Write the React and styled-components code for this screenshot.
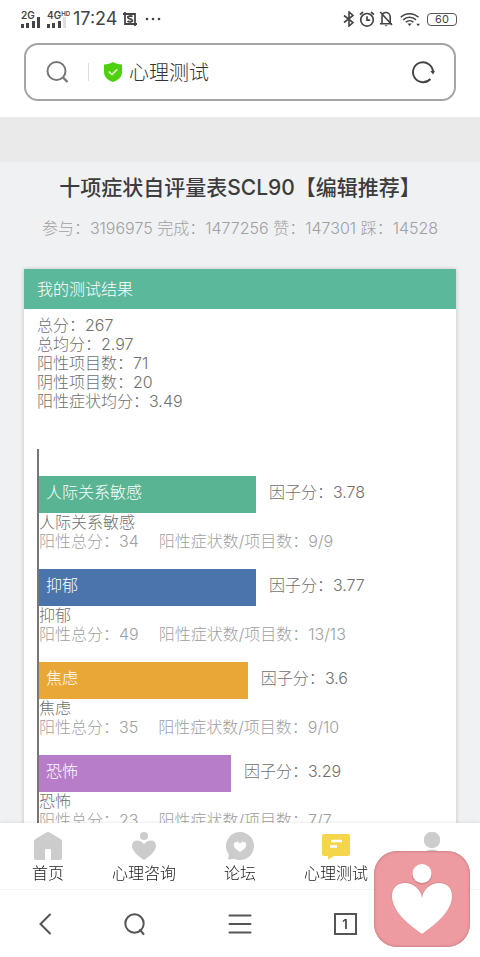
import React, { useState } from "react";
import styled, { createGlobalStyle } from "styled-components";

const factors = [
  { name: "人际关系敏感", score: "3.78", total: 34, items: "9/9", color: "#58b492", width: 53.7 },
  { name: "抑郁", score: "3.77", total: 49, items: "13/13", color: "#4b74ac", width: 53.7 },
  { name: "焦虑", score: "3.6", total: 35, items: "9/10", color: "#e9a836", width: 51.7 },
  { name: "恐怖", score: "3.29", total: 23, items: "7/7", color: "#b77dc8", width: 47.5 },
];

const summary = [
  ["总分", "267"],
  ["总均分", "2.97"],
  ["阳性项目数", "71"],
  ["阴性项目数", "20"],
  ["阳性症状均分", "3.49"],
];

const Bars = ({ weak }) => (
  <svg width="20" height="18" viewBox="0 0 20 18" fill="#444">
    <rect x="0" y="14" width="3" height="4" />
    <rect x="5" y="13" width="3" height="5" />
    <rect x="11" y="11" width="3" height="7" />
    <rect x="16" y="7" width="3" height="11" fill={weak ? "#ddd" : "#444"} />
  </svg>
);

const StatusBar = () => (
  <Status>
    <StatusGroup>
      <Signal>
        <Bars />
        <SignalLabel>2G</SignalLabel>
      </Signal>
      <Signal>
        <Bars weak />
        <SignalLabel>
          4G<sup>HD</sup>
        </SignalLabel>
      </Signal>
      <Clock>17:24</Clock>
      <svg width="14" height="14" viewBox="0 0 14 14" fill="none" stroke="#444" strokeWidth="1.8">
        <path d="M0 2h12v12M2 0v12h12" />
        <path d="M9.5 4.6C8.500 3.800 4.600 3.600 4.800 5.500C5 7.300 9.400 6.300 9.400 8.400C9.400 10.200 5.600 10 4.500 9" />
      </svg>
      <Dots width="16" height="4" viewBox="0 0 16 4" fill="#444">
        <circle cx="2" cy="2" r="1.300" />
        <circle cx="8" cy="2" r="1.300" />
        <circle cx="14" cy="2" r="1.300" />
      </Dots>
    </StatusGroup>
    <StatusIcons>
      <svg width="12" height="16" viewBox="0 0 12 16" fill="none" stroke="#444" strokeWidth="1.6">
        <path d="M1 4.500L10 11.500L6 15V1L10 4.500L1 11.500" />
      </svg>
      <svg width="16" height="16" viewBox="0 0 16 16" fill="none" stroke="#444" strokeWidth="1.7">
        <circle cx="8" cy="8.800" r="6.300" />
        <path d="M8 5.200V9.200H11.200M1 3.600L4 1M15 3.600L12 1" />
      </svg>
      <svg width="14" height="16" viewBox="0 0 14 16" fill="none" stroke="#444" strokeWidth="1.6">
        <path d="M3 12.500V5.800C3 3.300 4.700 1.500 7 1.500S11.200 3.300 11.200 5.800V12.500M1 12.700H13M1.200 1L13 14" />
        <path d="M5.500 14.200H8.700L7.100 15.600Z" fill="#444" stroke="none" />
      </svg>
      <Wifi width="20" height="15" viewBox="0 0 20 15" fill="none" stroke="#444" strokeWidth="1.5">
        <path d="M.7 5.300C5.500.4 13.500.4 18.500 5.300M3.200 7.900C6.800 4.400 12.400 4.400 16 7.900M5.800 10.300C8 8.200 11.300 8.200 13.500 10.300" />
        <path d="M7.400 11.500H11.800L9.600 14ZM16.300 11.800H20L18.150 14.200Z" fill="#444" stroke="none" />
      </Wifi>
      <Battery>60</Battery>
    </StatusIcons>
  </Status>
);

const AddressBar = () => {
  const [text, setText] = useState("心理测试");

  return (
    <Address onSubmit={(e) => e.preventDefault()}>
      <svg width="24" height="24" viewBox="0 0 24 24" fill="none" stroke="#777" strokeWidth="2">
        <circle cx="11.500" cy="11" r="9" />
        <path d="M18 17.500L22.500 22" strokeWidth="2.400" />
      </svg>
      <Divider />
      <svg width="18" height="20" viewBox="0 0 18 20">
        <path d="M9 0C11.500 1.700 14.500 2.200 18 2.500V10C18 15 14 18.500 9 20C4 18.500 0 15 0 10V2.500C3.500 2.200 6.500 1.700 9 0Z" fill="#4fd00c" />
        <path d="M4.800 9.500L8 12.600L13.300 7.300" fill="none" stroke="#d9f8c6" strokeWidth="1.700" />
      </svg>
      <AddressInput aria-label="地址" value={text} onChange={(e) => setText(e.target.value)} />
      <IconButton type="button" aria-label="刷新">
        <svg width="24" height="24" viewBox="0 0 24 24" fill="none" stroke="#444" strokeWidth="1.900">
          <path d="M19.400 19A10 10 0 1 1 22 12" />
          <path d="M19.300 11H24L22 14.500Z" fill="#444" stroke="none" />
        </svg>
      </IconButton>
    </Address>
  );
};

const Factor = ({ factor }) => (
  <FactorItem>
    <BarRow>
      <Bar $color={factor.color} style={{ width: `${factor.width}%` }}>
        {factor.name}
      </Bar>
      <Score>因子分：{factor.score}</Score>
    </BarRow>
    <FactorName>{factor.name}</FactorName>
    <FactorDetail>
      <span>阳性总分：{factor.total}</span>
      <span>阳性症状数/项目数：{factor.items}</span>
    </FactorDetail>
  </FactorItem>
);

const TabBar = () => (
  <Tabs>
    <Tab href="#/">
      <svg width="28" height="28" viewBox="0 0 28 28">
        <path d="M12.400.6Q14-.4 15.600.6L26.500 7Q28 8 28 9.500V26Q28 28 26 28H17V18Q17 17 16 17H12Q11 17 11 18V28H2Q0 28 0 26V9.500Q0 8 1.500 7Z" fill="#ccc" />
      </svg>
      首页
    </Tab>
    <Tab href="#/consult">
      <svg width="28" height="28" viewBox="0 0 28 28" fill="#ccc">
        <circle cx="14" cy="4" r="4" />
        <path d="M14 28C9.500 25 2 19.500 2 14C2 10.500 4.300 8.500 7 8.500C10 8.500 12.500 9.800 14 12.500C15.500 9.800 18 8.500 21 8.500C23.700 8.500 26 10.500 26 14C26 19.500 18.500 25 14 28Z" />
      </svg>
      心理咨询
    </Tab>
    <Tab href="#/forum">
      <svg width="28" height="28" viewBox="0 0 28 28">
        <path d="M14 0A14 14 0 1 1 7.500 26.400C5.500 27.600 3.500 27.500 1.700 27C2.600 25.500 2.900 24 2.700 22.300A14 14 0 0 1 14 0Z" fill="#ccc" />
        <path d="M14 20C11 18 7.800 15.800 7.800 12.700C7.800 9.500 12 8.500 14 11.700C16 8.500 20.200 9.500 20.200 12.700C20.200 15.800 17 18 14 20Z" fill="#fff" />
      </svg>
      论坛
    </Tab>
    <Tab href="#/test">
      <svg width="30" height="28" viewBox="0 0 30 28">
        <path d="M3 2H27Q29 2 29 4V22Q29 24 27 24H13L7 27.500V24H3Q1 24 1 22V4Q1 2 3 2Z" fill="#f5d64b" />
        <path d="M10 9H21M9 14.500H16" stroke="#fff" strokeWidth="2.400" />
      </svg>
      心理测试
    </Tab>
    <Tab href="#/me" aria-label="个人">
      <svg width="28" height="28" viewBox="0 0 28 28" fill="#ccc">
        <circle cx="14" cy="8" r="8.300" />
        <path d="M2 28C2 21 8 17.500 14 17.500S26 21 26 28Z" />
      </svg>
    </Tab>
  </Tabs>
);

const Toolbar = () => (
  <Tools>
    <IconButton aria-label="后退">
      <svg width="24" height="24" viewBox="0 0 24 24" fill="none" stroke="#555" strokeWidth="2">
        <path d="M17 2.500L7.500 12L17 21.500" strokeLinecap="round" />
      </svg>
    </IconButton>
    <IconButton aria-label="搜索">
      <svg width="24" height="24" viewBox="0 0 24 24" fill="none" stroke="#555" strokeWidth="2">
        <circle cx="11.500" cy="11.500" r="9.200" />
        <path d="M17 18L20.500 22" strokeLinecap="round" />
      </svg>
    </IconButton>
    <IconButton aria-label="菜单">
      <svg width="24" height="24" viewBox="0 0 24 24" stroke="#555" strokeWidth="2" strokeLinecap="round">
        <path d="M1.500 3.500H22.500M1.500 12H22.500M1.500 20.500H22.500" />
      </svg>
    </IconButton>
    <IconButton aria-label="窗口">
      <WindowCount>1</WindowCount>
    </IconButton>
    <IconButton aria-label="主页">
      <svg width="24" height="24" viewBox="0 0 24 24" fill="none" stroke="#555" strokeWidth="2">
        <path d="M2 11L12 2L22 11M5 9V22H19V9" />
      </svg>
    </IconButton>
  </Tools>
);

const App = () => (
  <>
    <GlobalStyle />
    <Screen>
      <Header>
        <StatusBar />
        <AddressBar />
      </Header>
      <Page>
        <Banner />
        <Title>十项症状自评量表SCL90【编辑推荐】</Title>
        <Counts>参与：3196975 完成：1477256 赞：147301 踩：14528</Counts>
        <Card>
          <CardTitle>我的测试结果</CardTitle>
          <CardBody>
            {summary.map(([label, value]) => (
              <div key={label}>
                {label}：{value}
              </div>
            ))}
            <Chart>
              {factors.map((factor) => (
                <Factor key={factor.name} factor={factor} />
              ))}
            </Chart>
          </CardBody>
        </Card>
      </Page>
      <TabBar />
      <Toolbar />
      <Floating aria-label="心理咨询">
        <svg width="96" height="96" viewBox="0 0 96 96">
          <circle cx="48" cy="24" r="10" fill="#d98a90" />
          <path d="M48 83C34 73 17.500 60 17.500 45C17.500 36 24 31 31 31C40 31 47 38 48 46C49 38 56 31 65 31C72 31 78.500 36 78.500 45C78.500 60 62 73 48 83Z" fill="#d98a90" />
          <circle cx="48" cy="22.500" r="9.500" fill="#fff" />
          <path d="M48 83C34 73 18 60 18 45C18 36 24 32 31 32C40 32 47 39 48 47C49 39 56 32 65 32C73 32 78 37 78 45C78 60 62 73 48 83Z" fill="#fff" />
        </svg>
      </Floating>
    </Screen>
  </>
);

export default App;

const GlobalStyle = createGlobalStyle`
  * {
    box-sizing: border-box;
  }

  body {
    margin: 0;
    font-family: Inter, "Noto Sans CJK SC", sans-serif;
    font-size: 16px;
    font-weight: 300;
    color: #777;
    background: #fff;
  }

  svg {
    display: block;
    flex: none;
  }
`;

const Screen = styled.div`
  display: flex;
  flex-direction: column;
  height: 100vh;
`;

const Header = styled.header`
  padding: 0 24px 16px;
  background: #fff;
`;

const Status = styled.div`
  display: flex;
  justify-content: space-between;
  height: 43px;
  padding-top: 8px;
  margin: 0 -1px 0 -3px;
  color: #444;
`;

const StatusGroup = styled.div`
  display: flex;
  align-items: center;
  gap: 6px;
  height: 22px;
`;

const StatusIcons = styled(StatusGroup)`
  gap: 4px;
`;

const Signal = styled.div`
  display: grid;
  grid-template-columns: 20px;

  & > * {
    grid-area: 1 / 1;
  }
`;

const SignalLabel = styled.span`
  font-size: 10px;
  font-weight: 600;
  line-height: 10px;
  white-space: nowrap;

  sup {
    font-size: 6px;
    line-height: 0;
    vertical-align: 3px;
  }
`;

const Clock = styled.span`
  font-size: 18px;
  font-weight: 400;
  line-height: 24px;
`;

const Dots = styled.svg`
  margin-left: 2px;
`;

const Wifi = styled.svg`
  margin: 0 3px;
`;

const Battery = styled.span`
  width: 30px;
  border: 1px solid #555;
  border-radius: 4px;
  font-size: 11px;
  font-weight: 400;
  line-height: 11px;
  text-align: center;
`;

const Address = styled.form`
  display: flex;
  align-items: center;
  height: 58px;
  padding: 0 19px;
  border: 2px solid #a5a5a5;
  border-radius: 14px;
`;

const Divider = styled.span`
  width: 1px;
  height: 18px;
  margin: 0 15px 0 19px;
  background: #ddd;
`;

const AddressInput = styled.input`
  flex: 1;
  min-width: 0;
  padding: 2px 7px 0;
  border: none;
  outline: none;
  background: none;
  font: inherit;
  font-size: 20px;
  line-height: 28px;
  color: #333;
`;

const IconButton = styled.button`
  display: flex;
  align-items: center;
  justify-content: center;
  padding: 0;
  border: none;
  background: none;
  font: inherit;
  cursor: pointer;
`;

const Page = styled.main`
  flex: 1;
  min-height: 0;
  overflow-y: auto;
  scrollbar-width: none;
  background: #f0f1f3;
`;

const Banner = styled.div`
  height: 45px;
  background: #eaeaea;
`;

const Title = styled.h1`
  margin: 11px 0;
  font-size: 21px;
  font-weight: 500;
  line-height: 30px;
  text-align: center;
  color: #3c3c3c;
`;

const Counts = styled.p`
  margin: 0 0 27px;
  line-height: 28px;
  text-align: center;
  white-space: nowrap;
  color: #a0a0a0;
`;

const Card = styled.section`
  margin: 0 24px;
  background: #fff;
  box-shadow: 0 0 4px rgba(0, 0, 0, 0.2);
`;

const CardTitle = styled.h2`
  margin: 0;
  padding: 0 13px;
  font-size: 16px;
  font-weight: 300;
  line-height: 40px;
  color: #fff;
  background: #5cb89a;
`;

const CardBody = styled.div`
  padding: 7px 13px;
  line-height: 19px;
  color: #707070;
`;

const Chart = styled.ul`
  margin: 38px 0 0;
  padding: 27px 0 0;
  border-left: 2px solid #777;
  list-style: none;
`;

const FactorItem = styled.li`
  padding-bottom: 18px;
`;

const BarRow = styled.div`
  display: flex;
`;

const Bar = styled.div`
  padding: 7px 7px 11px;
  color: #fff;
  background: ${(props) => props.$color};
`;

const Score = styled.span`
  padding: 7px 0 0 13px;
`;

const FactorName = styled.div`
  color: #707070;
`;

const FactorDetail = styled.div`
  display: flex;
  gap: 20px;
  color: #a0a0a0;
`;

const Tabs = styled.nav`
  position: relative;
  display: grid;
  grid-template-columns: repeat(5, 1fr);
  height: 66px;
  padding-top: 9px;
  background: #fff;
  box-shadow: 0 0 4px rgba(0, 0, 0, 0.12);
`;

const Tab = styled.a`
  display: flex;
  flex-direction: column;
  align-items: center;
  gap: 2px;
  line-height: 22px;
  text-decoration: none;
  color: #222;
`;

const Tools = styled.div`
  position: relative;
  display: grid;
  grid-template-columns: 3fr 3fr 4fr 3fr 3fr;
  height: 68px;
  border-top: 1px solid #f3f3f3;
  background: #fff;
`;

const WindowCount = styled.span`
  width: 23px;
  border: 2px solid #555;
  font-size: 13px;
  font-weight: 600;
  line-height: 18px;
  color: #444;
`;

const Floating = styled(IconButton)`
  position: fixed;
  right: 10px;
  bottom: 10px;
  border-radius: 23px;
  background: #ed9aa0;
  box-shadow: inset 0 0 2px 1px #cf868b;
`;
